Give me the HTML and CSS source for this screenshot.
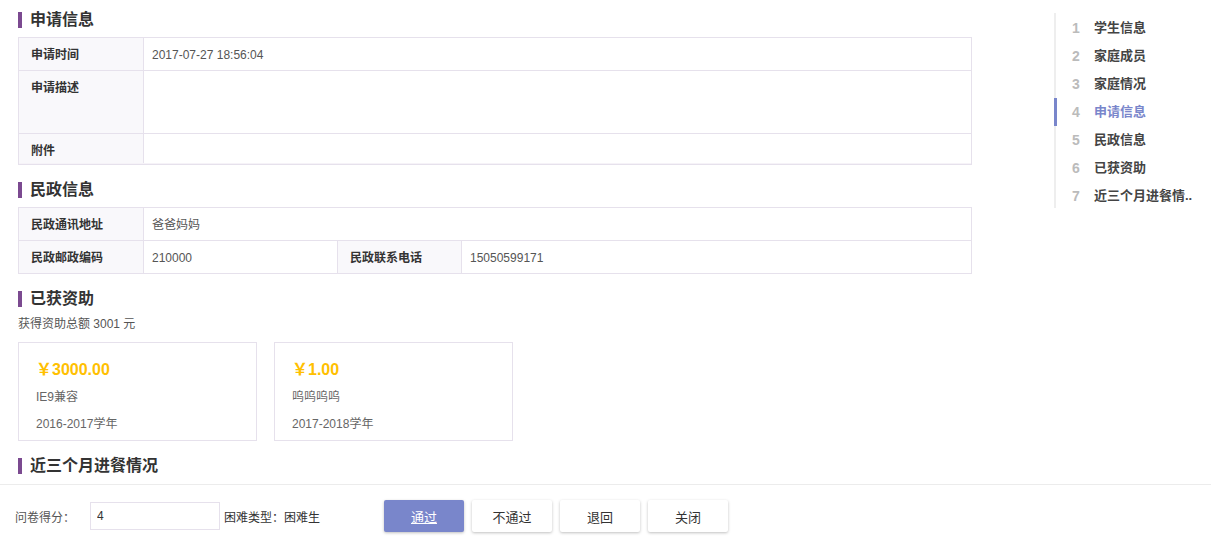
FILE: index.html
```html
<!DOCTYPE html>
<html lang="zh-CN">
    <head>
        <meta charset="UTF-8" />
        <meta name="viewport" content="width=device-width, initial-scale=1.0" />
        <title>审核</title>
        <link rel="stylesheet" href="styles.css">
    </head>
    <body>
        <div class="page">
            <main class="content">
                <h2 class="sec-title">申请信息</h2>
                <table class="info">
                    <tr class="r-norm">
                        <th>申请时间</th>
                        <td>2017-07-27 18:56:04</td>
                    </tr>
                    <tr class="r-tall">
                        <th>申请描述</th>
                        <td></td>
                    </tr>
                    <tr class="r-file">
                        <th>附件</th>
                        <td></td>
                    </tr>
                    <tr class="r-gap">
                        <td colspan="2"></td>
                    </tr>
                </table>

                <h2 class="sec-title">民政信息</h2>
                <table class="info">
                    <colgroup>
                        <col style="width:125px">
                        <col style="width:194px">
                        <col style="width:124px">
                        <col>
                    </colgroup>
                    <tr class="r-norm">
                        <th>民政通讯地址</th>
                        <td colspan="3">爸爸妈妈</td>
                    </tr>
                    <tr class="r-norm">
                        <th>民政邮政编码</th>
                        <td>210000</td>
                        <th>民政联系电话</th>
                        <td>15050599171</td>
                    </tr>
                </table>

                <h2 class="sec-title">已获资助</h2>
                <p class="total">获得资助总额 3001 元</p>
                <div class="cards">
                    <div class="card">
                        <div class="amount">￥3000.00</div>
                        <div class="card-line">IE9兼容</div>
                        <div class="card-line">2016-2017学年</div>
                    </div>
                    <div class="card">
                        <div class="amount">￥1.00</div>
                        <div class="card-line">呜呜呜呜</div>
                        <div class="card-line">2017-2018学年</div>
                    </div>
                </div>

                <h2 class="sec-title">近三个月进餐情况</h2>
            </main>

            <nav class="steps">
                <a class="step"><span class="num">1</span>学生信息</a>
                <a class="step"><span class="num">2</span>家庭成员</a>
                <a class="step"><span class="num">3</span>家庭情况</a>
                <a class="step active"><span class="num">4</span>申请信息</a>
                <a class="step"><span class="num">5</span>民政信息</a>
                <a class="step"><span class="num">6</span>已获资助</a>
                <a class="step"><span class="num">7</span>近三个月进餐情..</a>
            </nav>
        </div>

        <footer class="bar">
            <label class="score-label" for="score">问卷得分：</label>
            <input type="text" id="score" class="score" value="4" />
            <span class="kind">困难类型：困难生</span>
            <div class="btns">
                <button class="btn primary"><u>通过</u></button>
                <button class="btn">不通过</button>
                <button class="btn">退回</button>
                <button class="btn">关闭</button>
            </div>
        </footer>
    </body>
</html>
```

FILE: styles.css
```css
* {
    padding: 0;
    margin: 0;
    box-sizing: border-box;
}
body {
    font-family: "Liberation Sans", "Noto Sans CJK SC", sans-serif;
    font-size: 12px;
    color: #555;
    background: #fff;
    width: 1211px;
    height: 542px;
    overflow: hidden;
}
.page {
    display: flex;
    height: 484px;
}
.content {
    width: 972px;
    margin-left: 18px;
}

.sec-title {
    display: flex;
    align-items: center;
    height: 16px;
    margin: 17px 0 9px;
    font-size: 16px;
    line-height: 16px;
    font-weight: bold;
    color: #333;
}
.sec-title:first-child {
    margin-top: 12px;
}
.sec-title::before {
    content: "";
    width: 4px;
    height: 16px;
    background: #7b4a90;
    margin-right: 8px;
}

.info {
    width: 954px;
    border-collapse: collapse;
    table-layout: fixed;
    border: 1px solid #e6e1ec;
}
.info th,
.info td {
    border: 1px solid #e6e1ec;
    text-align: left;
    vertical-align: top;
    padding: 9px 12px 0;
    line-height: 16px;
}
.info th {
    width: 125px;
    background: #f9f8fb;
    color: #333;
    font-weight: bold;
}
.info td {
    background: #fff;
    padding-left: 8px;
}
.info tr.r-norm th,
.info tr.r-norm td {
    height: 33px;
}
.info tr.r-tall th,
.info tr.r-tall td {
    height: 63px;
}
.info tr.r-file th,
.info tr.r-file td {
    height: 29px;
    border-bottom: none;
}
.info tr.r-gap td {
    height: 2px;
    padding: 0;
    border-top: none;
    background: #f6f3f8;
}

.total {
    margin-top: 1px;
    color: #555;
    line-height: 16px;
}

.cards {
    display: flex;
    gap: 17px;
    margin-top: 10px;
}
.card {
    width: 239px;
    height: 99px;
    border: 1px solid #e6e1ec;
    padding: 17px 16px 0 17px;
}
.amount {
    font-size: 16px;
    font-weight: bold;
    color: #ffc000;
    line-height: 20px;
}
.card-line {
    line-height: 16px;
    margin-top: 9px;
    color: #666;
}
.card-line + .card-line {
    margin-top: 11px;
}

.steps {
    margin: 13px 0 0 64px;
    padding-top: 1px;
    border-left: 2px solid #eee;
    height: 195px;
    width: 157px;
}
.step {
    display: flex;
    align-items: center;
    height: 28px;
    padding-left: 15px;
    font-size: 13px;
    line-height: 16px;
    font-weight: bold;
    color: #444;
    margin-left: -2px;
    border-left: 3px solid transparent;
    white-space: nowrap;
}
.step .num {
    width: 22px;
    font-size: 14px;
    color: #bbb;
    font-weight: bold;
}
.step.active {
    border-left-color: #7986cb;
    color: #7986cb;
}

.bar {
    border-top: 1px solid #ececec;
    height: 58px;
    display: flex;
    align-items: center;
    padding: 5px 0 0 15px;
    color: #555;
}
.score-label,
.kind {
    font-family: "Noto Sans CJK TC", sans-serif;
}
.score-label {
    width: 75px;
}
.score {
    width: 130px;
    height: 28px;
    border: 1px solid #e6e1ec;
    padding: 0 6px;
    font-family: inherit;
    font-size: 12px;
    color: #333;
    outline: none;
}
.kind {
    margin-left: 4px;
    color: #333;
}
.btns {
    display: flex;
    gap: 8px;
    margin-left: 64px;
}
.btn {
    width: 80px;
    height: 32px;
    border: none;
    background: #fff;
    font-family: inherit;
    font-size: 13px;
    color: #333;
    box-shadow: 0 1px 3px rgba(0, 0, 0, 0.25);
    border-radius: 2px;
}
.btn.primary {
    background: #7986cb;
    color: #fff;
}
```
